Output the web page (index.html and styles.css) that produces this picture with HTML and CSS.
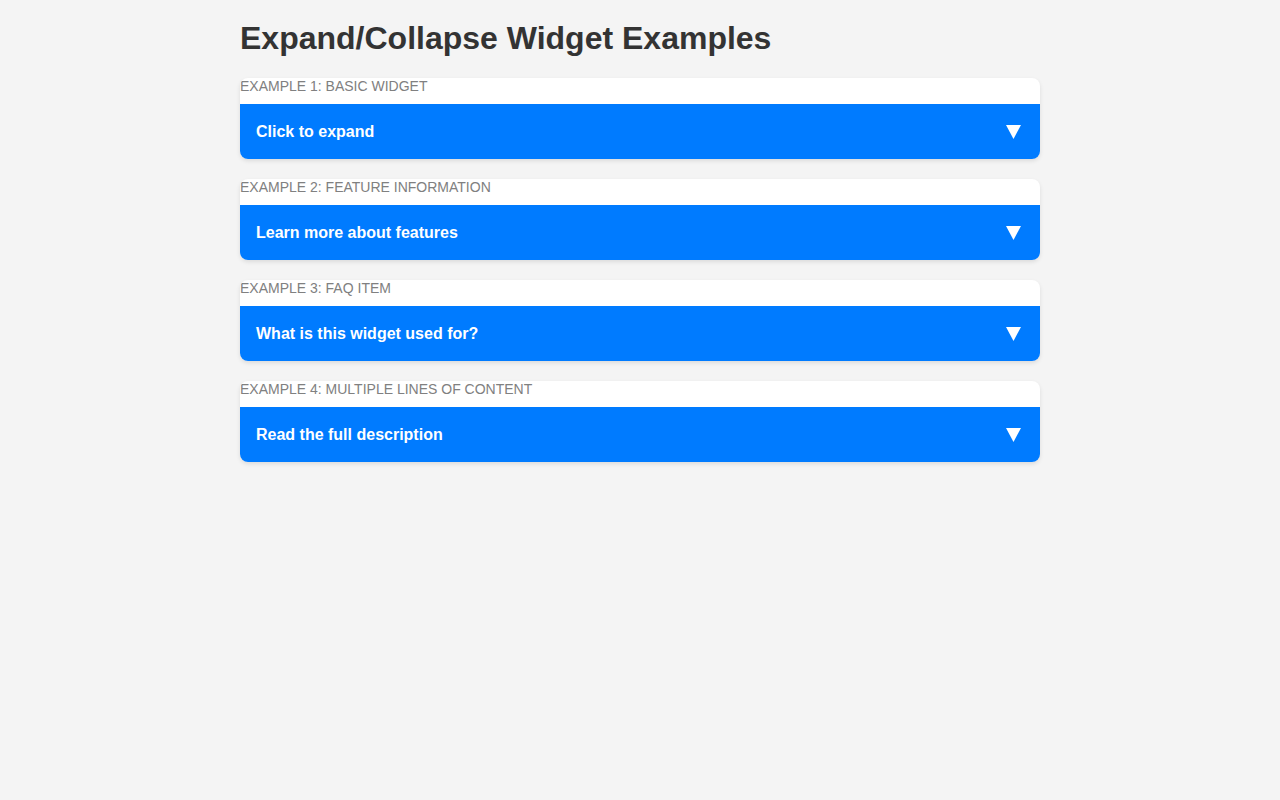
FILE: index.html
```html
<!DOCTYPE html>
<html lang="en">
<head>
<meta charset="utf-8">
<title>Expand/Collapse Widget Examples</title>
<link rel="stylesheet" href="styles.css">
</head>
<body>
<main class="page">
  <h1 class="title">Expand/Collapse Widget Examples</h1>

  <section class="widget">
    <div class="widget-label">Example 1: Basic Widget</div>
    <button class="widget-toggle" type="button">
      <span>Click to expand</span>
      <svg class="arrow" width="15" height="14" viewBox="0 0 15 14"><polygon points="0,0 15,0 7.5,14" fill="#fff"/></svg>
    </button>
  </section>

  <section class="widget">
    <div class="widget-label">Example 2: Feature Information</div>
    <button class="widget-toggle" type="button">
      <span>Learn more about features</span>
      <svg class="arrow" width="15" height="14" viewBox="0 0 15 14"><polygon points="0,0 15,0 7.5,14" fill="#fff"/></svg>
    </button>
  </section>

  <section class="widget">
    <div class="widget-label">Example 3: FAQ Item</div>
    <button class="widget-toggle" type="button">
      <span>What is this widget used for?</span>
      <svg class="arrow" width="15" height="14" viewBox="0 0 15 14"><polygon points="0,0 15,0 7.5,14" fill="#fff"/></svg>
    </button>
  </section>

  <section class="widget">
    <div class="widget-label">Example 4: Multiple Lines of Content</div>
    <button class="widget-toggle" type="button">
      <span>Read the full description</span>
      <svg class="arrow" width="15" height="14" viewBox="0 0 15 14"><polygon points="0,0 15,0 7.5,14" fill="#fff"/></svg>
    </button>
  </section>
</main>
</body>
</html>
```

FILE: styles.css
```css
html, body {
  margin: 0;
  padding: 0;
  background: #f4f4f4;
  font-family: "Liberation Sans", Arial, sans-serif;
}

.page {
  width: 800px;
  margin: 0 auto;
  padding-top: 20px;
}

.title {
  margin: 0 0 21px;
  font-size: 32px;
  font-weight: bold;
  color: #333;
  line-height: 37px;
}

.widget {
  background: #fff;
  border-radius: 8px;
  box-shadow: 0 2px 4px rgba(0, 0, 0, 0.1);
  overflow: hidden;
  margin-bottom: 20px;
}

.widget-label {
  font-size: 14px;
  line-height: 16px;
  color: #808080;
  text-transform: uppercase;
  margin-bottom: 10px;
}

.widget-toggle {
  display: flex;
  align-items: center;
  justify-content: space-between;
  width: 100%;
  height: 55px;
  padding: 0 19px 0 16px;
  border: none;
  background: #007bff;
  color: #fff;
  font-family: "Liberation Sans", Arial, sans-serif;
  font-size: 16px;
  font-weight: bold;
  text-align: left;
  cursor: pointer;
}

.arrow {
  display: block;
  margin-top: 0;
}
```
